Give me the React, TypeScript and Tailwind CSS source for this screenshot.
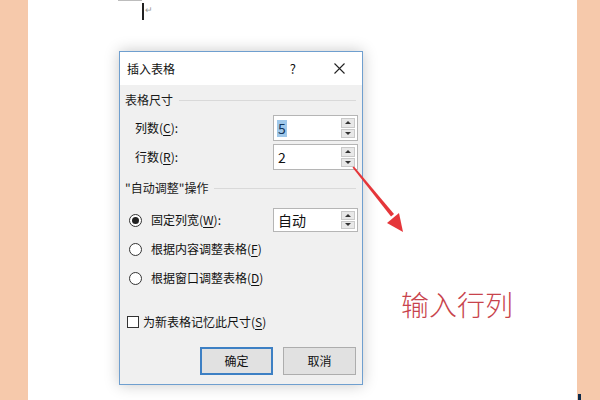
import React from 'react'

const font = { fontFamily: '"Noto Sans CJK SC", "Noto Sans", sans-serif' }

const U = ({ children }: { children: React.ReactNode }) => <span className="underline underline-offset-2">{children}</span>

const SectionHeader = ({ title, className }: { title: React.ReactNode; className: string }) => (
  <div className={`flex items-center h-[16px] pl-[5px] pr-[6px] ${className}`}>
    <span className="text-[12px] leading-none text-[#1a1a1a]">{title}</span>
    <div className="flex-1 ml-[6px] h-px bg-[#d9d9d9]" />
  </div>
)

const Spinner = ({ value, selected }: { value: string; selected?: boolean }) => (
  <div className="w-[85px] h-full bg-white border border-[#b5b5b5] flex items-stretch">
    <div className="flex-1 flex items-center pl-[3px]">
      {selected ? (
        <span className="bg-[#9fc8ea] text-[#13365c] text-[14px] leading-[17px] px-[1px]">{value}</span>
      ) : (
        <span className="text-[#111] text-[14px] leading-[17px] px-[1px]">{value}</span>
      )}
    </div>
    <div className="w-[14px] my-[2px] mr-[2px] flex flex-col gap-px">
      <div className="flex-1 bg-[#e8e8e8] border border-[#c9c9c9] flex items-center justify-center">
        <span className="block w-0 h-0 border-l-[3px] border-r-[3px] border-b-[3px] border-l-transparent border-r-transparent border-b-[#333]" />
      </div>
      <div className="flex-1 bg-[#e8e8e8] border border-[#c9c9c9] flex items-center justify-center">
        <span className="block w-0 h-0 border-l-[3px] border-r-[3px] border-t-[3px] border-l-transparent border-r-transparent border-t-[#333]" />
      </div>
    </div>
  </div>
)

const Radio = ({ checked }: { checked?: boolean }) => (
  <span className="w-[13px] h-[13px] rounded-full border border-[#333] bg-white flex items-center justify-center">
    {checked && <span className="w-[7px] h-[7px] rounded-full bg-[#222]" />}
  </span>
)

const InsertTableDialog = () => (
  <div className="w-[244px] h-[334px] border border-[#6f9fcf] bg-[#f0f0f0] flex flex-col shadow-[0_0_14px_rgba(0,0,0,0.22)]" style={font}>
    <div className="h-[33px] bg-white flex items-center pl-[7px] text-[12px] text-[#111]">
      <span>插入表格</span>
      <span className="ml-auto mr-[38px] text-[13px]">?</span>
      <svg width="11" height="11" viewBox="0 0 11 11" className="mr-[17px]">
        <path d="M0.5 0.5 L10.5 10.5 M10.5 0.5 L0.5 10.5" stroke="#222" strokeWidth="1.1" />
      </svg>
    </div>

    <SectionHeader title="表格尺寸" className="mt-[7px]" />
    <div className="mt-[7px] h-[26px] flex items-center pl-[15px] pr-[4px] text-[12px] text-[#111]">
      <span>列数(<U>C</U>):</span>
      <div className="ml-auto h-full"><Spinner value="5" selected /></div>
    </div>
    <div className="mt-[3px] h-[26px] flex items-center pl-[15px] pr-[4px] text-[12px] text-[#111]">
      <span>行数(<U>R</U>):</span>
      <div className="ml-auto h-full"><Spinner value="2" /></div>
    </div>

    <SectionHeader title={'"自动调整"操作'} className="mt-[10px]" />
    <div className="mt-[12px] h-[24px] flex items-center pl-[9px] pr-[4px] text-[12px] text-[#111]">
      <Radio checked />
      <span className="ml-[9px]">固定列宽(<U>W</U>):</span>
      <div className="ml-auto h-full"><Spinner value="自动" /></div>
    </div>
    <div className="mt-[7px] h-[20px] flex items-center pl-[9px] text-[12px] text-[#111]">
      <Radio />
      <span className="ml-[9px]">根据内容调整表格(<U>F</U>)</span>
    </div>
    <div className="mt-[9px] h-[20px] flex items-center pl-[9px] text-[12px] text-[#111]">
      <Radio />
      <span className="ml-[9px]">根据窗口调整表格(<U>D</U>)</span>
    </div>

    <div className="mt-[24px] h-[20px] flex items-center pl-[7px] text-[12px] text-[#111]">
      <span className="w-[12px] h-[12px] border border-[#333] bg-white" />
      <span className="ml-[4px]">为新表格记忆此尺寸(<U>S</U>)</span>
    </div>

    <div className="mt-[15px] h-[28px] flex justify-end gap-[10px] pr-[6px] text-[12px] text-[#111]">
      <button className="w-[73px] h-full bg-[#e1e1e1] border-2 border-[#3d80c4]">确定</button>
      <button className="w-[73px] h-full bg-[#e1e1e1] border border-[#adadad]">取消</button>
    </div>
  </div>
)

export default function App() {
  return (
    <div className="relative w-[600px] h-[400px] flex bg-[#f6c9ab] overflow-hidden">
      <div className="w-[28px]" />
      <div className="w-[549px] h-full bg-white flex flex-col">
        <div className="h-[51px] pl-[90px] flex">
          <div className="relative w-[30px]">
            <div className="h-px w-[24px] bg-[#bdbdbd]" />
            <div className="absolute left-[24px] top-[3px] w-[2px] h-[17px] bg-[#222]" />
            <span className="absolute left-[27px] top-[3px] text-[9px] text-[#999]">↵</span>
          </div>
        </div>
        <div className="pl-[91px]">
          <InsertTableDialog />
        </div>
      </div>
      <div className="flex-1 flex flex-col justify-end">
        <div className="ml-[1px] w-[3px] h-[6px] bg-[#0d2a4a]" />
      </div>

      <svg className="absolute inset-0 pointer-events-none" width="600" height="400">
        <polygon points="352.5,167.5 354,166.5 394,214 391,216.5" fill="#e5363a" />
        <polygon points="403,232 387,223 399,213" fill="#e5363a" />
      </svg>
      <span
        className="absolute left-[401px] top-[286px] text-[28px] leading-[36px] tracking-[0px] text-[#c8434c] font-light"
        style={font}
      >
        输入行列
      </span>
    </div>
  )
}
